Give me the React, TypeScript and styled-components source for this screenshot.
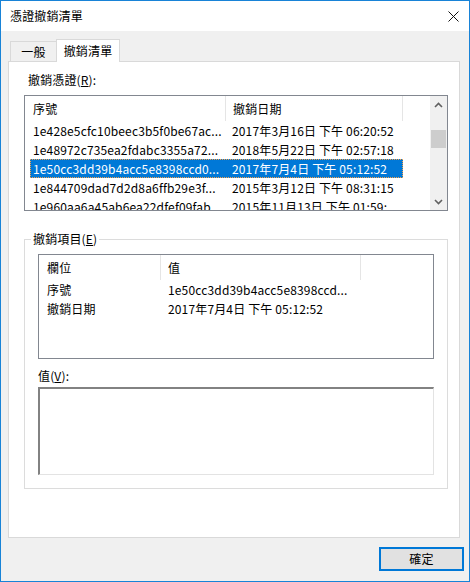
import React from "react";
import styled, { createGlobalStyle } from "styled-components";

const Global = createGlobalStyle`
  html, body { margin: 0; padding: 0; background: #ffffff; }
  * { box-sizing: border-box; }
  body {
    font-family: "Noto Sans CJK TC", "Noto Sans", sans-serif;
    font-size: 12px;
    letter-spacing: 0.15px;
    color: #000;
  }
`;

const Window = styled.div`
  width: 470px;
  height: 582px;
  border: 1px solid #1883d7;
  display: flex;
  flex-direction: column;
  background: #f0f0f0;
`;

const TitleBar = styled.div`
  height: 30px;
  background: #ffffff;
  display: flex;
  align-items: center;
  justify-content: space-between;
  padding: 0 8px 0 9px;
  line-height: 16px;
`;

const TitleText = styled.span`
  font-size: 12px;
`;

const CloseBtn = styled.div`
  width: 12px;
  height: 12px;
  display: flex;
  align-items: center;
  justify-content: center;
  margin-right: 2px;
`;

const Body = styled.div`
  flex: 1;
  display: flex;
  flex-direction: column;
  padding: 8px 7px 9px 7px;
`;

const TabRow = styled.div`
  display: flex;
  align-items: flex-end;
  height: 22px;
  padding-left: 2px;
  position: relative;
  z-index: 1;
`;

const Tab = styled.div<{ $active?: boolean }>`
  height: ${(p) => (p.$active ? 23 : 20)}px;
  margin-bottom: ${(p) => (p.$active ? -1 : 0)}px;
  margin-left: ${(p) => (p.$active ? -1 : 0)}px;
  width: ${(p) => (p.$active ? 64 : 47)}px;
  border: 1px solid #d9d9d9;
  border-bottom: none;
  background: ${(p) => (p.$active ? "#ffffff" : "#f0f0f0")};
  display: flex;
  align-items: center;
  justify-content: center;
  line-height: 16px;
  padding-bottom: ${(p) => (p.$active ? 1 : 0)}px;
`;

const Panel = styled.div`
  width: 452px;
  height: 477px;
  background: #ffffff;
  border: 1px solid #d9d9d9;
  padding: 10px 0 0 15px;
  display: flex;
  flex-direction: column;
`;

const Label = styled.div<{ $indent?: number }>`
  line-height: 16px;
  height: 16px;
  padding-left: ${(p) => p.$indent ?? 0}px;
`;

const ListBox = styled.div<{ $w: number; $h: number }>`
  width: ${(p) => p.$w}px;
  height: ${(p) => p.$h}px;
  border: 1px solid #828790;
  background: #ffffff;
  display: flex;
  overflow: hidden;
  flex-shrink: 0;
`;

const ListMain = styled.div`
  flex: 1;
  display: flex;
  flex-direction: column;
  overflow: hidden;
`;

const HeaderRow = styled.div<{ $h: number }>`
  display: flex;
  height: ${(p) => p.$h}px;
  flex-shrink: 0;
`;

const HeaderCell = styled.div<{ $w?: number; $pad: number }>`
  ${(p) => (p.$w ? `width: ${p.$w}px;` : "flex: 1;")}
  padding-left: ${(p) => p.$pad}px;
  display: flex;
  align-items: center;
  line-height: 16px;
  border-right: ${(p) => (p.$w ? "1px solid #e5e5e5" : "none")};
  white-space: nowrap;
  overflow: hidden;
`;

const Row = styled.div<{ $sel?: boolean; $indent: number; $w: number }>`
  display: flex;
  height: 19px;
  flex-shrink: 0;
  margin-left: ${(p) => p.$indent}px;
  width: ${(p) => p.$w}px;
  background: ${(p) => (p.$sel ? "#0078d7" : "transparent")};
  color: ${(p) => (p.$sel ? "#ffffff" : "#000000")};
  outline: ${(p) => (p.$sel ? "1px dotted #f7a14a" : "none")};
  outline-offset: -1px;
`;

const Cell = styled.div<{ $w?: number; $pad: number }>`
  ${(p) => (p.$w ? `width: ${p.$w}px;` : "flex: 1;")}
  padding-left: ${(p) => p.$pad}px;
  display: flex;
  align-items: center;
  line-height: 16px;
  white-space: nowrap;
  overflow: hidden;
`;

const ScrollBar = styled.div`
  width: 17px;
  background: #f0f0f0;
  display: flex;
  flex-direction: column;
  flex-shrink: 0;
`;

const ArrowBox = styled.div`
  height: 17px;
  display: flex;
  align-items: center;
  justify-content: center;
`;

const Track = styled.div`
  flex: 1;
  display: flex;
  flex-direction: column;
  align-items: center;
`;

const Thumb = styled.div`
  width: 15px;
  height: 18px;
  background: #cdcdcd;
  margin-top: 17px;
`;

const Group = styled.fieldset`
  width: 424px;
  margin: 20px 0 0 0;
  padding: 0 0 13px 13px;
  border: 1px solid #dcdcdc;
  min-width: 0;
`;

const Legend = styled.legend`
  padding: 0 2px;
  margin-left: -7px;
  line-height: 16px;
  font-size: 12px;
`;

const Spacer = styled.div<{ $h: number }>`
  height: ${(p) => p.$h}px;
  flex-shrink: 0;
`;

const TextArea = styled.div`
  width: 396px;
  height: 88px;
  background: #ffffff;
  border-top: 2px solid #828282;
  border-left: 2px solid #828282;
  border-right: 1px solid #e3e3e3;
  border-bottom: 1px solid #e3e3e3;
`;

const Footer = styled.div`
  display: flex;
  justify-content: flex-end;
  margin-top: 9px;
  margin-right: -2px;
`;

const Button = styled.div`
  width: 85px;
  height: 24px;
  border: 2px solid #0078d7;
  background: #e1e1e1;
  display: flex;
  align-items: center;
  justify-content: center;
  line-height: 16px;
`;

const Arrow = ({ up }: { up?: boolean }) => (
  <svg width="9" height="6" viewBox="0 0 9 6">
    <polyline
      points={up ? "1,5 4.5,1.5 8,5" : "1,1 4.5,4.5 8,1"}
      fill="none"
      stroke="#606060"
      strokeWidth="1.6"
    />
  </svg>
);

const certs = [
  { serial: "1e428e5cfc10beec3b5f0be67ac...", date: "2017年3月16日 下午 06:20:52" },
  { serial: "1e48972c735ea2fdabc3355a72...", date: "2018年5月22日 下午 02:57:18" },
  { serial: "1e50cc3dd39b4acc5e8398ccd0...", date: "2017年7月4日 下午 05:12:52", sel: true },
  { serial: "1e844709dad7d2d8a6ffb29e3f...", date: "2015年3月12日 下午 08:31:15" },
  { serial: "1e960aa6a45ab6ea22dfef09fab...", date: "2015年11月13日 下午 01:59:" },
];

const entries = [
  { field: "序號", value: "1e50cc3dd39b4acc5e8398ccd..." },
  { field: "撤銷日期", value: "2017年7月4日 下午 05:12:52" },
];

export default function App() {
  return (
    <>
      <Global />
      <Window>
        <TitleBar>
          <TitleText>憑證撤銷清單</TitleText>
          <CloseBtn>
            <svg width="11" height="11" viewBox="0 0 11 11">
              <path d="M0.5 0.5 L10.5 10.5 M10.5 0.5 L0.5 10.5" stroke="#111" strokeWidth="1" />
            </svg>
          </CloseBtn>
        </TitleBar>
        <Body>
          <TabRow>
            <Tab>一般</Tab>
            <Tab $active>撤銷清單</Tab>
          </TabRow>
          <Panel>
            <Label $indent={4}>
              撤銷憑證(<u>R</u>):
            </Label>
            <Spacer $h={7} />
            <ListBox $w={424} $h={116}>
              <ListMain>
                <HeaderRow $h={25}>
                  <HeaderCell $w={201} $pad={8}>序號</HeaderCell>
                  <HeaderCell $w={177} $pad={7}>撤銷日期</HeaderCell>
                  <HeaderCell $pad={0} />
                </HeaderRow>
                {certs.map((c) => (
                  <Row key={c.serial} $sel={c.sel} $indent={5} $w={373}>
                    <Cell $w={196} $pad={3}>{c.serial}</Cell>
                    <Cell $pad={6}>{c.date}</Cell>
                  </Row>
                ))}
              </ListMain>
              <ScrollBar>
                <ArrowBox>
                  <Arrow up />
                </ArrowBox>
                <Track>
                  <Thumb />
                </Track>
                <ArrowBox>
                  <Arrow />
                </ArrowBox>
              </ScrollBar>
            </ListBox>
            <Group>
              <Legend>
                撤銷項目(<u>E</u>)
              </Legend>
              <Spacer $h={7} />
              <ListBox $w={396} $h={105}>
                <ListMain>
                  <HeaderRow $h={25}>
                    <HeaderCell $w={122} $pad={8}>欄位</HeaderCell>
                    <HeaderCell $w={200} $pad={7}>值</HeaderCell>
                    <HeaderCell $pad={0} />
                  </HeaderRow>
                  {entries.map((e) => (
                    <Row key={e.field} $indent={0} $w={394}>
                      <Cell $w={122} $pad={8}>{e.field}</Cell>
                      <Cell $pad={7}>{e.value}</Cell>
                    </Row>
                  ))}
                </ListMain>
              </ListBox>
              <Spacer $h={9} />
              <Label>
                值(<u>V</u>):
              </Label>
              <Spacer $h={3} />
              <TextArea />
            </Group>
          </Panel>
          <Footer>
            <Button>確定</Button>
          </Footer>
        </Body>
      </Window>
    </>
  );
}
